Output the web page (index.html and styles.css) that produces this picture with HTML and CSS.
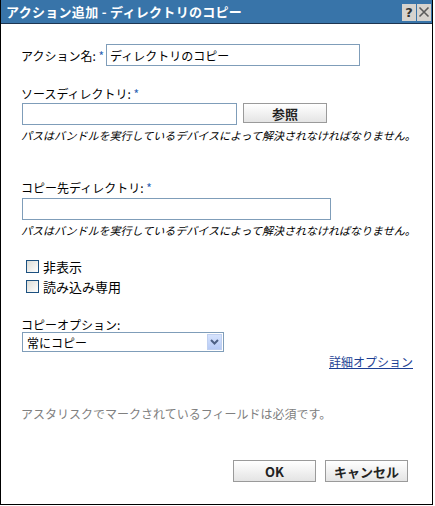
FILE: index.html
```html
<html>
<head>
<title>アクション追加 - ディレクトリのコピー</title>
<link rel="stylesheet" href="styles.css">
</head>
<body>
<div class="dialog">
  <div class="titlebar">
    <span class="title">アクション追加 - ディレクトリのコピー</span>
    <div class="title-buttons">
      <span class="tbtn help">?</span>
      <span class="tbtn close">
        <svg width="12" height="12" viewBox="0 0 12 12">
          <path d="M1.5 1.5 L10.5 10.5 M10.5 1.5 L1.5 10.5" stroke="#5a5a5a" stroke-width="1.6" fill="none"/>
        </svg>
      </span>
    </div>
  </div>

  <div class="content">
    <div class="name-row">
      <label class="name-label">アクション名: <span class="req">*</span></label>
      <input type="text" class="field name-field" value="ディレクトリのコピー">
    </div>

    <div class="label label-source">ソースディレクトリ: <span class="req">*</span></div>
    <div class="browse-row">
      <input type="text" class="field source-field">
      <button class="btn browse">参照</button>
    </div>
    <div class="hint">パスはバンドルを実行しているデバイスによって解決されなければなりません。</div>

    <div class="label label-dest">コピー先ディレクトリ: <span class="req">*</span></div>
    <input type="text" class="field dest-field">
    <div class="hint">パスはバンドルを実行しているデバイスによって解決されなければなりません。</div>

    <div class="checks">
      <label class="check"><span class="box"></span>非表示</label>
      <label class="check"><span class="box"></span>読み込み専用</label>
    </div>

    <div class="label label-option">コピーオプション:</div>
    <div class="select">
      <span class="select-text">常にコピー</span>
      <span class="select-arrow">
        <svg width="9" height="6" viewBox="0 0 9 6">
          <path d="M1 1 L4.5 4.5 L8 1" stroke="#4d6185" stroke-width="2" fill="none"/>
        </svg>
      </span>
    </div>
    <div class="link-row"><a href="#" class="more">詳細オプション</a></div>

    <div class="note">アスタリスクでマークされているフィールドは必須です。</div>

    <div class="actions">
      <button class="btn action">OK</button>
      <button class="btn action">キャンセル</button>
    </div>
  </div>
</div>
</body>
</html>
```

FILE: styles.css
```css
body {
  margin: 0;
  padding: 0;
  background-color: #ffffff;
  font-family: "Noto Sans CJK JP", "DejaVu Sans", sans-serif;
  font-size: 12px;
  color: #000000;
}

.dialog {
  width: 431px;
  height: 504px;
  border: 1px solid #000000;
  border-top: none;
  background-color: #ffffff;
}

.titlebar {
  height: 23px;
  background-color: #3874a9;
  border-bottom: 1px solid #1e3550;
  display: flex;
  align-items: center;
  justify-content: space-between;
  padding-left: 5px;
  padding-right: 1px;
}

.title {
  color: #ffffff;
  font-size: 13px;
  font-weight: bold;
  letter-spacing: 0.3px;
}

.title-buttons {
  display: flex;
  gap: 1px;
  margin-top: 1px;
}

.tbtn {
  width: 14px;
  height: 17px;
  background-color: #d6d3ce;
  display: flex;
  align-items: center;
  justify-content: center;
}

.help {
  font-family: "DejaVu Sans", sans-serif;
  font-weight: bold;
  font-size: 13px;
  color: #333333;
}

.content {
  padding-left: 20px;
  padding-right: 19px;
}

.field {
  box-sizing: border-box;
  height: 22px;
  border: 1px solid #7f9db9;
  font-family: "Noto Sans CJK JP", sans-serif;
  font-size: 12px;
  padding: 0 3px;
  margin: 0;
}

.req {
  color: #2d64b4;
}

.name-row {
  display: flex;
  align-items: center;
  margin-top: 20px;
}

.name-label {
  width: 85px;
}

.name-field {
  width: 254px;
}

.label {
  line-height: 15px;
}

.label-source {
  margin-top: 20px;
}

.browse-row {
  display: flex;
  gap: 6px;
  margin-top: 2px;
  margin-left: 1px;
}

.source-field {
  width: 215px;
}

.dest-field {
  display: block;
  width: 309px;
  margin-top: 3px;
  margin-left: 1px;
}

.hint {
  font-size: 11px;
  font-style: italic;
  line-height: 14px;
  margin-top: 3px;
  white-space: nowrap;
}

.label-dest {
  margin-top: 38px;
}

.btn {
  box-sizing: border-box;
  height: 20px;
  border: 1px solid #9a9a9a;
  background: linear-gradient(#ffffff, #e4e4e4);
  font-family: "Noto Sans CJK JP", sans-serif;
  font-size: 12px;
  font-weight: bold;
  color: #222222;
  padding: 0;
  margin: 0;
}

.browse {
  width: 84px;
  font-size: 13px;
}

.checks {
  margin-top: 19px;
  margin-left: 5px;
}

.check {
  display: flex;
  align-items: center;
  height: 20px;
  gap: 4px;
  font-size: 13px;
}

.box {
  width: 11px;
  height: 11px;
  border: 1px solid #1c5180;
  background: linear-gradient(135deg, #dcdcd6, #ffffff);
}

.label-option {
  margin-top: 21px;
}

.select {
  box-sizing: border-box;
  width: 202px;
  height: 20px;
  margin-left: 1px;
  border: 1px solid #7f9db9;
  display: flex;
  align-items: center;
  justify-content: space-between;
  padding-left: 4px;
  padding-right: 1px;
}

.select-arrow {
  width: 15px;
  height: 16px;
  background: linear-gradient(#d6e3fd, #b7cbf6);
  border: 1px solid #c0d0f0;
  box-sizing: border-box;
  display: flex;
  align-items: center;
  justify-content: center;
}

.link-row {
  text-align: right;
  margin-top: 2px;
  line-height: 15px;
}

.more {
  color: #1c3f94;
  text-decoration: underline;
}

.note {
  margin-top: 37px;
  color: #808080;
  line-height: 15px;
}

.actions {
  display: flex;
  justify-content: flex-end;
  gap: 9px;
  margin-top: 39px;
  padding-right: 5px;
}

.action {
  width: 83px;
  height: 22px;
  font-size: 13px;
}
```
